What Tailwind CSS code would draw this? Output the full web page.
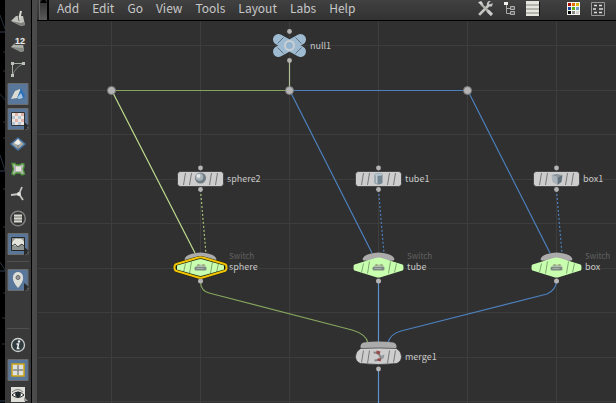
<!DOCTYPE html>
<html lang="en">
<head>
<meta charset="utf-8">
<title>Network editor</title>
<script src="https://cdn.jsdelivr.net/npm/@tailwindcss/browser@4"></script>
</head>
<body class="h-screen overflow-hidden bg-[#303030] font-['Noto_Sans_CJK_SC','Noto_Sans',sans-serif] text-[#c8c8c8]">
<div class="flex h-full">
  <div class="w-[5px] shrink-0 bg-black">
    <svg class="block h-full w-full" fill="none" stroke="#26303c" aria-hidden="true"><path d="M0 15L5 29M0 94L5 100M0 155L5 170M0 262L5 270" /><path d="M0 32H5M0 171H5M0 271H5M0 401H5" stroke="#334155"/><path d="M3 52h2M3 71h2M3 122h2M3 138h2M3 189h2M3 227h2M3 293h2M2 318h3M2 344h3" stroke="#333"/></svg>
  </div>
  <nav aria-label="Display options" class="flex w-[26px] shrink-0 flex-col bg-[#393939] pt-[6px]">
    <button aria-label="Primitive normals" class="h-[25px] shrink-0 px-[2px]"><svg class="size-[22px]" viewBox="0 0 22 22"><path d="M4 13L9 8 16 8 18 17 14 18Z" fill="#c2c2bc"/><path d="M4 13L14 18 18 17 17 14 14 15Z" fill="#7f817c"/><path d="M12 12L14 3" stroke="#d9d9d2" stroke-width="2"/><path d="M11 7L12 13" stroke="#555" /></svg></button>
    <button aria-label="Primitive numbers" class="h-[25px] shrink-0 px-[2px]"><svg class="size-[22px]" viewBox="0 0 22 22"><path d="M4 14L9 9 16 10 17 18 14 19Z" fill="#aeb0aa"/><path d="M4 14L14 19 17 18 16 15Z" fill="#858883"/><text x="8" y="11" font-size="9" font-weight="700" fill="#eee" stroke="#444" stroke-width="2" paint-order="stroke" font-family="Liberation Sans">12</text></svg></button>
    <button aria-label="Hulls" class="h-[25px] shrink-0 px-[2px]"><svg class="size-[22px]" viewBox="0 0 22 22" fill="none"><path d="M5.500 18V5.500H17" stroke="#a9afa8"/><path d="M5.500 18Q8 9 17 5.500" stroke="#777e77"/><path d="M4 4h3v3H4zM4 16h3v3H4zM15 4h3v3h-3z" fill="#b9c1b8"/></svg></button>
    <button aria-label="Shading" aria-pressed="true" class="h-[25px] shrink-0 px-[2px]"><svg class="size-[22px]" viewBox="0 0 22 22"><path d="M1 .5h20v21H1z" fill="#58779a" stroke="#6c6c6c"/><path d="M4 16L8 8 13 6 14 11 10 15Z" fill="#dddcd2"/><path d="M10 15L14 5 18 13 16 16Z" fill="#2d70b8"/><path d="M10 15L14 10 16 15 12 16Z" fill="#a7c8e5"/></svg></button>
    <button aria-label="Textures" aria-pressed="true" class="h-[25px] shrink-0 px-[2px]"><svg class="size-[22px]" viewBox="0 0 22 22"><path d="M1 .5h20v21H1z" fill="#58779a" stroke="#6c6c6c"/><path d="M4.500 4.500h13v13h-13z" fill="#e9e6e2" stroke="#343434"/><path d="M8 5h3v3H8zM14 5h3v3h-3zM8 11h3v3H8zM14 11h3v3h-3z" fill="#dfb3ad"/><path d="M5 8h3v3H5zM11 8h3v3h-3zM5 14h3v3H5zM11 14h3v3h-3z" fill="#b5c6d8"/><path d="M17 14l5 4-2 1 1 3-2-1-2 2z" fill="#292929"/></svg></button>
    <button aria-label="Subdivision" class="h-[25px] shrink-0 px-[2px]"><svg class="size-[22px]" viewBox="0 0 22 22"><path d="M11 5L18 11 11 17 4 11Z" fill="#a6aaa8" stroke="#43719e" stroke-width="1.500"/><path d="M11 6L14 10 11 12 7 10Z" fill="#f0f0e9"/><path d="M11 12v4" stroke="#777"/></svg></button>
    <button aria-label="Group outlines" class="h-[25px] shrink-0 px-[2px]"><svg class="size-[22px]" viewBox="0 0 22 22"><path d="M5 5.500L8 5.500 9 7H13L15 5.500 17 6V9L16 11 17.500 16 15 17 13 15H9L7 17 5 16 6.500 11Z" fill="#b5b8b2" stroke="#4d983a" stroke-width="1.300"/><path d="M9 8.500h5V13H9z" fill="#e4e3df"/></svg></button>
    <button aria-label="Origin axes" class="h-[25px] shrink-0 px-[2px]"><svg class="size-[22px]" viewBox="0 0 22 22"><path d="M12 11L15 4M12 11L16 17M12 11L4 12" fill="none" stroke="#c4c6c2" stroke-width="1.800"/><circle cx="12" cy="11" r="2" fill="#e6e6e1"/></svg></button>
    <button aria-label="Field guide" class="h-[25px] shrink-0 px-[2px]"><svg class="size-[22px]" viewBox="0 0 22 22"><circle cx="11" cy="10.500" r="7.300" fill="#343434" stroke="#818181" stroke-width="1.500"/><path d="M7 6.500h8v8H7z" fill="#d6d7d0"/><path d="M7 9h8M7 12h8" stroke="#73746f"/></svg></button>
    <button aria-label="Background image" aria-pressed="true" class="h-[25px] shrink-0 px-[2px]"><svg class="size-[22px]" viewBox="0 0 22 22"><path d="M1 .5h20v21H1z" fill="#58779a" stroke="#6c6c6c"/><path d="M4.500 4.500h13v13h-13z" fill="#8f9590" stroke="#272727"/><path d="M5 10q3-6 6-4 4-1 6 3v3l-3-1-3 2-6-1z" fill="#e3e4db"/><path d="M5 13l3-2 3 3 4-3 2 2" fill="none" stroke="#4a4d4a"/><path d="M17 14l5 4-2 1 1 3-2-1-2 2z" fill="#292929"/></svg></button>
    <hr class="mx-[2px] my-[5px] shrink-0 border-[#505050]">
    <button aria-label="Location" aria-pressed="true" class="h-[25px] shrink-0 px-[2px]"><svg class="size-[22px]" viewBox="0 0 22 22"><path d="M1 .5h20v21H1z" fill="#58779a" stroke="#6c6c6c"/><path d="M11 19Q5 12 6 8A5 5 0 0 1 16 8Q17 12 11 19Z" fill="#deded9"/><circle cx="11" cy="8.500" r="2" fill="#999" stroke="#666"/><path d="M17 14l5 4-2 1 1 3-2-1-2 2z" fill="#292929"/></svg></button>
    <hr class="mx-[2px] mt-[36px] mb-[3px] shrink-0 border-[#505050]">
    <button aria-label="Information" class="h-[25px] shrink-0 px-[2px]"><svg class="size-[22px]" viewBox="0 0 22 22"><circle cx="11" cy="11" r="6.500" fill="#303b3f" stroke="#cfd2ce" stroke-width="1.300"/><circle cx="12" cy="7.500" r="1.200" fill="#eee"/><path d="M9.500 10h2l-1 4.500h2" fill="none" stroke="#eee" stroke-width="1.500"/></svg></button>
    <button aria-label="Quad view" aria-pressed="true" class="h-[25px] shrink-0 px-[2px]"><svg class="size-[22px]" viewBox="0 0 22 22"><path d="M1 .5h20v21H1z" fill="#58779a" stroke="#6c6c6c"/><path d="M5 5h12v12H5z" fill="#e0e0dc" stroke="#c9a413" stroke-width="1.500"/><path d="M11 6v10M6 11h10" stroke="#85877f" stroke-width="1.500"/></svg></button>
    <button aria-label="Visibility" class="h-[25px] shrink-0 px-[2px]"><svg class="size-[22px]" viewBox="0 0 22 22"><path d="M4 3h14v15H4z" fill="#dedfd9"/><path d="M5 11q6-6 12 0-6 5-12 0z" fill="#fff" stroke="#222"/><circle cx="11" cy="10.500" r="2.800" fill="#20292b"/><path d="M5 8q6-5 11 0" fill="none" stroke="#777"/><path d="M17 13l4 4h-4z" fill="#999"/></svg></button>
  </nav>
  <div class="w-[6px] shrink-0 border-l border-black bg-[#4a4a4a]"></div>
  <main class="flex min-w-0 flex-1 flex-col">
    <header class="flex h-[21px] shrink-0 border-b border-black bg-linear-to-b from-[#414141] to-[#323232]">
      <button aria-label="Collapse menu" class="ml-[2px] flex w-[10px] shrink-0 justify-center border-r-2 border-l border-r-black border-l-[#606060] bg-linear-to-b from-[#303030] to-[#5a5a5a]"><svg class="h-[4px] w-[7px]" viewBox="0 0 7 4"><path d="M0 3L2 0H5L7 3Z" fill="#000"/></svg></button>
      <nav aria-label="Main menu" class="flex items-start gap-[13px] pl-[8px] text-[12px] leading-[16px]">
        <button>Add</button><button>Edit</button><button>Go</button><button>View</button><button>Tools</button><button>Layout</button><button>Labs</button><button>Help</button>
      </nav>
      <div class="ml-auto flex items-start gap-[8px] pr-[10px]">
        <button aria-label="Tools settings"><svg class="size-[17px]" viewBox="0 0 16 16" fill="none"><path d="M2 14L11 5" stroke="#c5c6c2" stroke-width="2.500"/><path d="M11 1q-3 2-1 5l4 0 1-3-3 1-1-1 2-2" fill="#c3c6c2"/><path d="M1 2l3-1 2 3-1 2z" fill="#d5d6d2"/><path d="M4 4l10 10" stroke="#b4b5b0" stroke-width="2"/><path d="M10 10l4 4" stroke="#ccc" stroke-width="3"/></svg></button>
        <button aria-label="Tree view"><svg class="size-[16px]" viewBox="0 0 16 16" fill="none"><path d="M4.500 4V13.500H9M5 8.500H9" stroke="#aaa"/><path d="M2 2h4v3H2z" fill="#f0f0ec"/><path d="M8.500 6.500h4v3h-4zM8.500 11.500h4v3h-4z" fill="#5c5c5c" stroke="#b0b0b0"/></svg></button>
        <button aria-label="List view"><svg class="size-[16px]" viewBox="0 0 16 16"><path d="M1 2h13v15H1z" fill="#111"/><path d="M0 1h13v15H0z" fill="#e6e6e0"/><path d="M0 4h13v2H0zM0 8h13v2H0zM0 12h13v2H0z" fill="#b3b5ad"/></svg></button>
        <button aria-label="Color palette" class="ml-[16px]"><svg class="size-[16px]" viewBox="0 0 16 16"><path d="M1 2h13v13H1z" fill="#f5f5f0"/><path d="M2 3h3v3H2z" fill="#b40b00"/><path d="M6 3h3v3H6z" fill="#e36c00"/><path d="M10 3h3v3h-3z" fill="#dfb600"/><path d="M2 7h3v3H2z" fill="#153f98"/><path d="M6 7h3v3H6z" fill="#5fab09"/><path d="M10 7h3v3h-3z" fill="#7197c4"/><path d="M2 11h3v3H2z" fill="#000"/><path d="M6 11h3v3H6z" fill="#888"/><path d="M10 11h3v3h-3z" fill="#d0d0cc"/></svg></button>
        <button aria-label="Network options"><svg class="size-[16px]" viewBox="0 0 16 16"><path d="M1.500 2.500h13v13h-13z" fill="#3b3b3b" stroke="#989898"/><path d="M4 5.500h3M9 5.500h3M3 9h3M9 9h4M4 12.500h3M9 12.500h3" stroke="#ddd" stroke-width="1.500"/></svg></button>
      </div>
    </header>
    <section aria-label="Node network" class="min-h-0 flex-1 bg-[#303030]">
      <svg class="block h-full w-full" font-size="9">
        <defs>
          <g id="flat">
            <circle cy="-11" r="2.400" fill="#b4b4b4"/><circle cy="10.500" r="2.400" fill="#b4b4b4"/>
            <rect x="-23" y="-7.500" width="46" height="15" rx="3" fill="#cdcdcd" stroke="#222" stroke-width=".6"/>
            <path d="M-17 6l2-12M-11 6l2-12M9 6l2-12M15 6l2-12" stroke="#777"/>
          </g>
          <g id="switch">
            <path d="M-16-8Q-15-14 0-15 15-14 16-8Q15-5 0-9-15-5-16-8Z" fill="#ababab"/>
            <circle cy="13.500" r="2.500" fill="#b4b4b4"/>
            <path d="M-24-3Q-25-3-25 0T-24 3L-3 9.500Q0 10.500 3 9.500L24 3Q25 3 25 0T24-3L3-9.500Q0-10.500-3-9.500Z" fill="#c8ffae"/>
            <path d="M-17 5l2-9M-11 6l2-12M10 6l2-12M16 5l2-9" stroke="#7fa671"/>
            <rect x="-6" y="-1" width="12" height="4" rx="1.500" fill="#7d8a82"/><path d="M-5-1l2-2h7l2 2z" fill="#b3c0b5"/><path d="M-3-2.500h2M2-2.500h2" stroke="#7c8a35"/><path d="M-4 1h7" stroke="#a4b0aa"/>
          </g>
        </defs>
        <g transform="translate(-37 -21)">
          <path d="M111.500 21V403M200.500 21V403M289.500 21V403M378.500 21V403M467.500 21V403M556.500 21V403M38 45.500H616M38 90.500H616M38 134.500H616M38 179.500H616M38 223.500H616M38 268.500H616M38 312.500H616M38 357.500H616M38 401.500H616" stroke="#3d3d3d"/>
          <g fill="none" stroke-width="1.200">
            <g stroke="#86a45d"><path d="M289.500 60V90" stroke="#b0bf98"/><path d="M111.500 90.500H289"/><path d="M200.500 190L206 254" stroke="#a5c274" stroke-dasharray="2 2"/><path d="M200.500 282Q201 291 209 293L352 330Q366 334 368 343"/></g>
            <path d="M111.500 90L195 253" stroke="#bfdc8e"/>
            <g stroke="#4d80be"><path d="M289.500 90.500H467"/><path d="M289.500 90L372 253"/><path d="M467.500 90L550 253"/><path d="M378.500 190L384 254M556.500 190L562 254" stroke-dasharray="2 2"/><path d="M378.500 281V344M378.500 370V403" stroke="#5f91cc"/><path d="M556.500 281Q556 290 547 294L401 331Q390 334 388 343"/></g>
          </g>
          <g fill="#b4b4b4" stroke="#777"><circle cx="111.500" cy="90.500" r="4"/><circle cx="289.500" cy="90.500" r="4"/><circle cx="467.500" cy="90.500" r="4"/></g>
          <g transform="translate(289.500 45.500)">
            <path d="M-11-6L11 6M11-6L-11 6" stroke="#9dbad0" stroke-width="11" stroke-linecap="round"/>
            <path d="M-12-2l6-6M-12 2l6 6M6-8l6 6M6 8l6-6" stroke="#5d6f7e"/>
            <circle r="4.500" fill="#92b4ce" stroke="#c9ced2" stroke-width="2"/><circle cy="-14" r="2.400" fill="#b4b4b4"/><circle cy="15" r="2.400" fill="#b4b4b4"/>
          </g>
          <g transform="translate(200.500 179)"><use href="#flat"/><circle cy="-1" r="5.500" fill="#6f7c83"/><circle cx="-1" cy="-2" r="3.800" fill="#a8b2b7"/><circle cx="-2" cy="-3" r="2" fill="#e1e5e6"/></g>
          <g transform="translate(378.500 179)"><use href="#flat"/><path d="M-4-5Q0-7 4-5V4Q0 7-4 4Z" fill="#738591"/><path d="M-3-4v8l2 1v-9z" fill="#bdc9cf"/><ellipse cy="-4.500" rx="4" ry="1.300" fill="#b5c3ca"/></g>
          <g transform="translate(556.500 179)"><use href="#flat"/><path d="M-5-4L1-2V6L-4 3Z" fill="#a9b3b9"/><path d="M1-2L6-4 5 3 1 6Z" fill="#64747e"/><path d="M-5-4L0-5 6-4 1-2Z" fill="#87949b"/></g>
          <g transform="translate(200.500 267.500)"><use href="#switch"/><path d="M-24-3.500Q-25-3-25 0T-24 3.500L-3 9.500Q0 10.500 3 9.500L24 3.500Q25 3 25 0T24-3.500L3-9.500Q0-10.500-3-9.500Z" fill="none" stroke="#16200e" stroke-width="3"/><path d="M-24-3.500Q-26-3-26 0T-24 3.500L-3 9.800Q0 10.800 3 9.800L24 3.500Q26 3 26 0T24-3.500L3-9.800Q0-10.800-3-9.800Z" fill="none" stroke="#f5c400" stroke-width="2"/></g>
          <use href="#switch" x="378.500" y="267.500"/>
          <use href="#switch" x="556.500" y="267.500"/>
          <g transform="translate(378.500 356.500)">
            <path d="M-15-14Q0-16 15-14 18-13 18-10T15-7H-15Q-18-7-18-10T-15-14Z" fill="#ababab"/><circle cy="12.500" r="2.400" fill="#b4b4b4"/>
            <path d="M-18-8Q0-9 18-8 23-5 23 0T18 7Q0 9-18 7-23 5-23 0T-18-8Z" fill="#cdcdcd" stroke="#222" stroke-width=".6"/>
            <path d="M-17 6l2-12M-11 7l2-13M9 7l2-13M15 6l2-12" stroke="#777"/>
            <path d="M-5-4Q1-4 2 1M-4 4Q0 4 4 1" fill="none" stroke="#858585" stroke-width="2"/><path d="M-2-6l4 1-1 3-3-1zM-1 2l4 0-1 3-3-1z" fill="#994747"/><path d="M3-1l3-1-1 4-3 0z" fill="#909aa0"/>
          </g>
          <g fill="#c8c8c8"><text x="310" y="49">null1</text><text x="227" y="182">sphere2</text><text x="405" y="182">tube1</text><text x="583" y="182">box1</text><text x="229" y="270">sphere</text><text x="407" y="270">tube</text><text x="585" y="270">box</text><text x="405" y="360">merge1</text></g>
          <g fill="#626262" font-size="8"><text x="229" y="259">Switch</text><text x="407" y="259">Switch</text><text x="585" y="259">Switch</text></g>
        </g>
      </svg>
    </section>
  </main>
</div>
</body>
</html>
